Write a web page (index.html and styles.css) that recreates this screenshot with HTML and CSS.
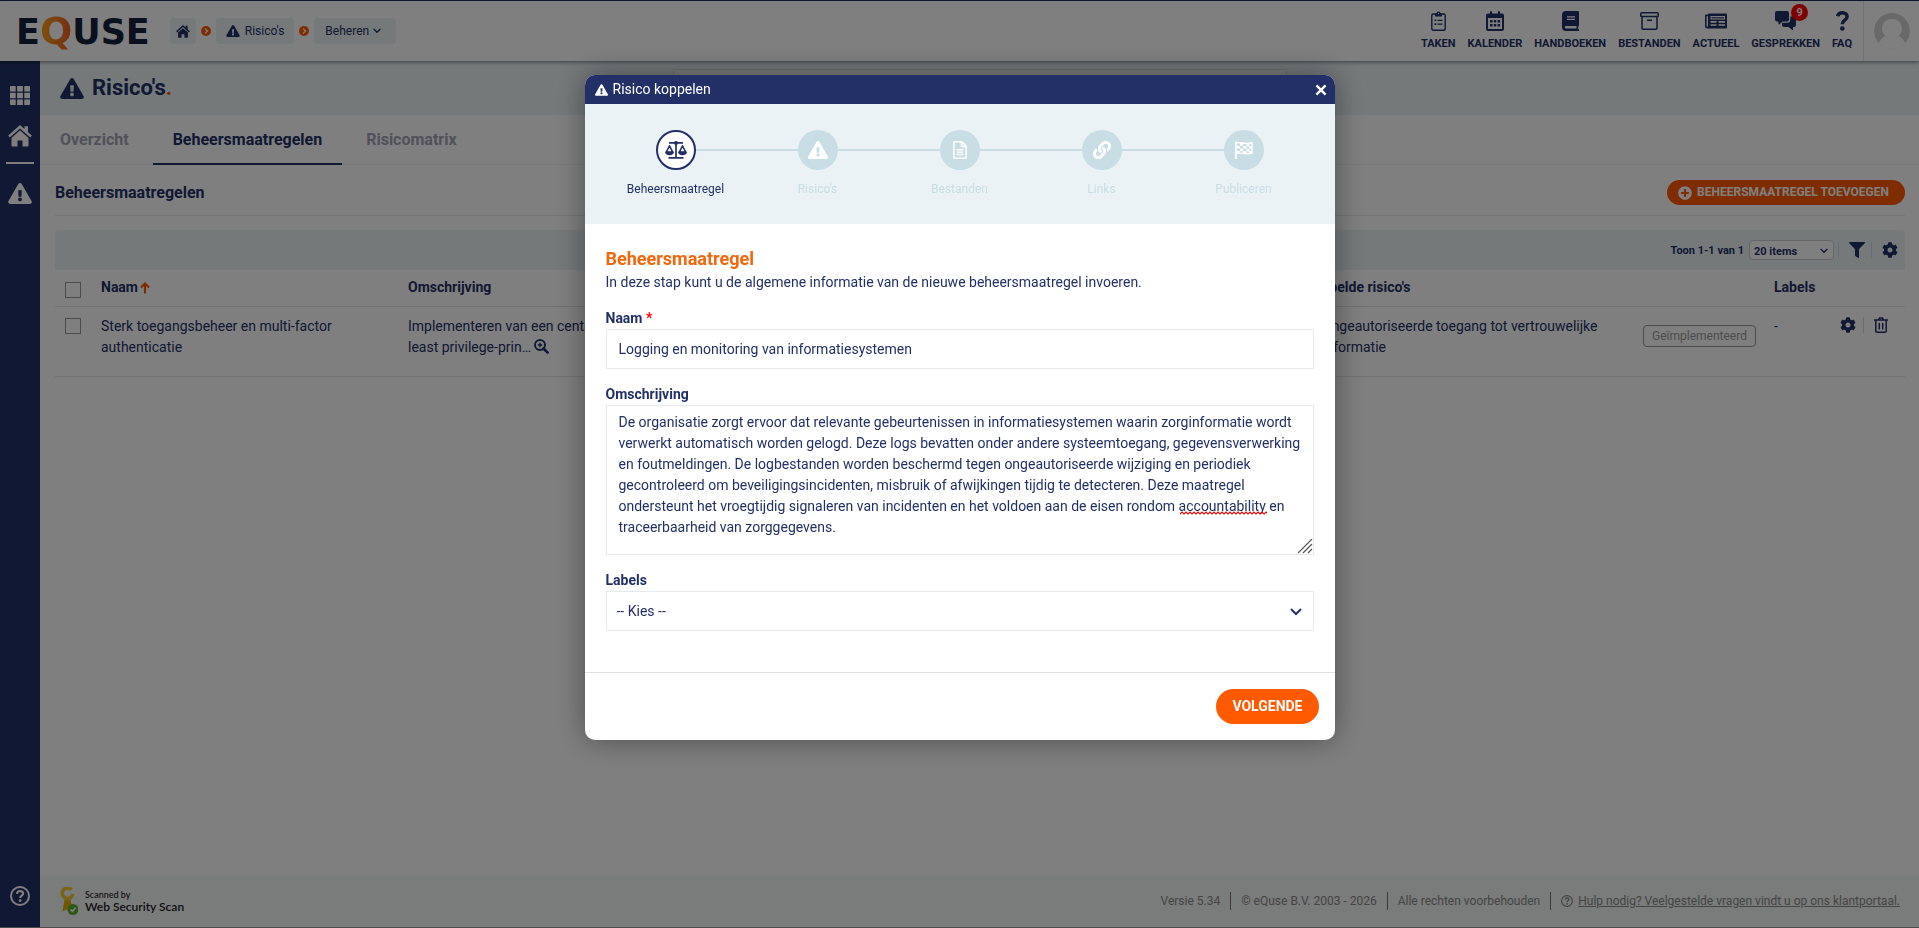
FILE: index.html
```html
<!DOCTYPE html>
<html lang="nl">
<head>
    <meta charset="UTF-8">
    <meta name="viewport" content="width=device-width, initial-scale=1.0">
    <title>Risico's</title>
    <link rel="stylesheet" href="styles.css">
</head>
<body>
    <!-- icons -->
    <svg class="icon-defs" aria-hidden="true">
        <symbol id="i-warning" viewBox="0 0 576 512">
            <path d="M569.517 440.013C587.975 472.007 564.806 512 527.94 512H48.054c-36.937 0-59.999-40.055-41.577-71.987L246.423 23.985c18.467-32.009 64.72-31.951 83.154 0l239.94 416.028zM288 354c-25.405 0-46 20.595-46 46s20.595 46 46 46 46-20.595 46-46-20.595-46-46-46zm-43.673-165.346l7.418 136c.347 6.364 5.609 11.346 11.982 11.346h48.546c6.373 0 11.635-4.982 11.982-11.346l7.418-136c.375-6.874-5.098-12.654-11.982-12.654h-63.383c-6.884 0-12.356 5.78-11.981 12.654z"/>
        </symbol>
        <symbol id="i-home" viewBox="0 0 24 22">
            <path d="M12 0 L16.500 4 V1.200 H20 V7.200 L23.800 10.600 L22.200 12.500 L12 3.400 L1.800 12.500 L.2 10.600 Z"/>
            <path d="M12 5.300 L20.500 12.900 V20.500 a1 1 0 0 1 -1 1 H14.500 V15.500 H9.500 V21.500 H4.500 a1 1 0 0 1 -1 -1 V12.900 Z"/>
        </symbol>
        <symbol id="i-grid" viewBox="0 0 20 19">
            <path d="M0 1a1 1 0 0 1 1-1H5.700V5.500H0zM7.100 0h5.800v5.500H7.100zM14.300 0H19a1 1 0 0 1 1 1V5.500H14.300zM0 6.800h5.700v5.400H0zM7.100 6.800h5.800v5.400H7.100zM14.300 6.800H20v5.400H14.300zM0 13.500h5.700V19H1a1 1 0 0 1-1-1zM7.100 13.500h5.800V19H7.100zM14.300 13.500H20V18a1 1 0 0 1-1 1h-4.700z"/>
        </symbol>
        <symbol id="i-help" viewBox="0 0 20 20">
            <g fill="none" stroke="currentColor" stroke-width="2">
                <circle cx="10" cy="10" r="9"/>
                <path stroke-width="2.200" d="M7 7.800 C7.200 5.800 8.500 5 10.100 5 C11.800 5 13.100 6.100 13.100 7.600 C13.100 9.600 10.200 9.700 10.200 11.900"/>
            </g>
            <circle cx="10.100" cy="14.600" r="1.400"/>
        </symbol>
        <symbol id="i-next" viewBox="0 0 10 10">
            <circle cx="5" cy="5" r="5"/>
            <path d="M4 2.600 L6.500 5 L4 7.400" fill="none" stroke="#fff" stroke-width="1.300"/>
        </symbol>
        <symbol id="i-chevron" viewBox="0 0 12 8">
            <path d="M1.500 1.500 L6 6 L10.500 1.500" fill="none" stroke="currentColor" stroke-width="2" stroke-linecap="round"/>
        </symbol>
        <symbol id="i-tasks" viewBox="0 0 15 20">
            <rect x=".8" y="3" width="13.400" height="16.200" rx="1.500" fill="none" stroke="currentColor" stroke-width="1.400"/>
            <path d="M4 2.600 H5.500 A2 2 0 0 1 9.500 2.600 H11 V5.500 H4 Z"/>
            <circle cx="7.500" cy="2.500" r=".7" fill="#fff"/>
            <path d="M3.500 8.500h1.800v1.600H3.500zM6.500 8.700h5v1.200h-5zM3.500 12.300h1.800v1.600H3.500zM6.500 12.500h5v1.200h-5z"/>
        </symbol>
        <symbol id="i-calendar" viewBox="0 0 18 20">
            <path d="M4 1a1 1 0 0 1 2 0V2.500H12V1a1 1 0 0 1 2 0V2.500H16a2 2 0 0 1 2 2V18a2 2 0 0 1-2 2H2a2 2 0 0 1-2-2V4.500a2 2 0 0 1 2-2H4z"/>
            <path fill="#fff" d="M2 7h14v11H2z"/>
            <path d="M4 9h2.500v2.500H4zM7.800 9h2.500v2.500H7.800zM11.600 9h2.500v2.500h-2.500zM4 13h2.500v2.500H4zM7.800 13h2.500v2.500H7.800zM11.600 13h2.500v2.500h-2.500z"/>
        </symbol>
        <symbol id="i-book" viewBox="0 0 17 20">
            <path d="M4 0H16a1 1 0 0 1 1 1V14.500l-.8 1v2.500l.8.800V20H4a4 4 0 0 1-4-4V4a4 4 0 0 1 4-4z"/>
            <path fill="#fff" d="M5 5.200h8v1.200H5zM5 7.700h8v1.200H5zM4 15h10.500v2.500H4a1.250 1.250 0 0 1 0-2.500z"/>
        </symbol>
        <symbol id="i-archive" viewBox="0 0 19 18">
            <g fill="none" stroke="currentColor" stroke-width="1.500">
                <rect x=".8" y=".8" width="17.400" height="3.800" rx=".8"/>
                <path d="M2 4.600V16.200a1 1 0 0 0 1 1H16a1 1 0 0 0 1-1V4.600M7 8.300h5"/>
            </g>
        </symbol>
        <symbol id="i-news" viewBox="0 0 22 15">
            <path d="M4 0H21a1 1 0 0 1 1 1V14a1 1 0 0 1-1 1H2.500A2.500 2.500 0 0 1 0 12.500V2a1 1 0 0 1 1-1H3a1 1 0 0 1 1-1z"/>
            <path fill="#fff" d="M1.600 2.800H3V12.500a.7.700 0 0 1-1.400 0zM5.500 2.600h14.500v3.300H5.500zM5.500 7.500h6v1.700h-6zM13.500 7.500h6.500v1.700h-6.500zM5.500 10.700h6v1.500h-6zM13.500 10.700h6.500v1.500h-6.500z"/>
            <path d="M6.500 3.700h12.500v1.200H6.500z"/>
        </symbol>
        <symbol id="i-chat" viewBox="0 0 21 20">
            <path d="M2 0H12a2 2 0 0 1 2 2V8.500a2 2 0 0 1-2 2H7.500L4 13.500a.4.400 0 0 1-.6-.3V10.500H2a2 2 0 0 1-2-2V2A2 2 0 0 1 2 0z"/>
            <path d="M15.300 5.500H19a2 2 0 0 1 2 2V14a2 2 0 0 1-2 2H18v2.800a.4.400 0 0 1-.6.300L13.500 16H9a2 2 0 0 1-2-2V11.800H12.300a3 3 0 0 0 3-3z"/>
        </symbol>
        <symbol id="i-question" viewBox="0 0 13 20">
            <path d="M1.500 5.200 C2.300 2.700 4.200 1.800 6.500 1.800 C9.200 1.800 11.100 3.400 11.100 5.800 C11.100 9.300 6.300 9.200 6.300 13.200" fill="none" stroke="currentColor" stroke-width="3.400"/>
            <circle cx="6.300" cy="17.500" r="2.300"/>
        </symbol>
        <symbol id="i-plus" viewBox="0 0 512 512">
            <path d="M256 8C119 8 8 119 8 256s111 248 248 248 248-111 248-248S393 8 256 8zm144 276c0 6.600-5.400 12-12 12h-92v92c0 6.600-5.400 12-12 12h-56c-6.600 0-12-5.400-12-12v-92h-92c-6.600 0-12-5.400-12-12v-56c0-6.600 5.400-12 12-12h92v-92c0-6.600 5.400-12 12-12h56c6.600 0 12 5.400 12 12v92h92c6.600 0 12 5.400 12 12v56z"/>
        </symbol>
        <symbol id="i-filter" viewBox="0 0 512 512">
            <path d="M487.976 0H24.028C2.710 0-8.047 25.866 7.058 40.971L192 225.941V432c0 7.831 3.821 15.170 10.237 19.662l80 55.980C298.020 518.690 320 507.493 320 487.980V225.941l184.947-184.970C520.021 25.896 509.338 0 487.976 0z"/>
        </symbol>
        <symbol id="i-cog" viewBox="0 0 512 512">
            <path d="M487.400 315.700l-42.600-24.600c4.300-23.200 4.300-47 0-70.200l42.600-24.600c4.900-2.800 7.100-8.600 5.500-14-11.100-35.600-30-67.800-54.700-94.600-3.800-4.100-10-5.100-14.800-2.300L380.800 110c-17.900-15.400-38.500-27.300-60.800-35.100V25.800c0-5.600-3.900-10.500-9.400-11.700-36.700-8.200-74.300-7.800-109.200 0-5.500 1.200-9.400 6.100-9.400 11.700V75c-22.200 7.900-42.800 19.800-60.800 35.100L88.700 85.500c-4.900-2.800-11-1.900-14.800 2.300-24.700 26.700-43.600 58.900-54.700 94.600-1.700 5.400.6 11.200 5.500 14L67.300 221c-4.300 23.200-4.300 47 0 70.200l-42.600 24.600c-4.900 2.800-7.100 8.600-5.500 14 11.100 35.600 30 67.800 54.700 94.600 3.800 4.100 10 5.100 14.800 2.300l42.600-24.600c17.900 15.400 38.500 27.300 60.800 35.100v49.200c0 5.600 3.900 10.500 9.400 11.700 36.700 8.200 74.300 7.800 109.200 0 5.500-1.200 9.400-6.100 9.400-11.700v-49.200c22.200-7.900 42.800-19.800 60.800-35.100l42.600 24.600c4.900 2.800 11 1.900 14.800-2.300 24.700-26.700 43.600-58.900 54.700-94.600 1.500-5.500-.7-11.300-5.600-14.100zM256 336c-44.100 0-80-35.900-80-80s35.900-80 80-80 80 35.900 80 80-35.900 80-80 80z"/>
        </symbol>
        <symbol id="i-trash" viewBox="0 0 14 16">
            <path d="M0 3h14M4.500 3 L5.500 1H8.500L9.500 3M1.800 3V14a1.200 1.200 0 0 0 1.200 1.200H11A1.200 1.200 0 0 0 12.200 14V3M5.300 6v6.500M8.700 6v6.500" fill="none" stroke="currentColor" stroke-width="1.500"/>
        </symbol>
        <symbol id="i-zoom" viewBox="0 0 15 15">
            <path d="M9.500 9.500L13.600 13.600" stroke="currentColor" stroke-width="2.600" stroke-linecap="round"/>
            <circle cx="6" cy="6" r="5" fill="none" stroke="currentColor" stroke-width="1.900"/>
            <path d="M3.700 6h4.600M6 3.700v4.600" stroke="currentColor" stroke-width="1.400"/>
        </symbol>
        <symbol id="i-up" viewBox="0 0 10 12">
            <path d="M5 11.500V1.500M1 5.500L5 1.500L9 5.500" fill="none" stroke="currentColor" stroke-width="2.200"/>
        </symbol>
        <symbol id="i-close" viewBox="0 0 10 10">
            <path d="M1.200 1.200L8.800 8.800M8.800 1.200L1.200 8.800" stroke="currentColor" stroke-width="2"/>
        </symbol>
        <symbol id="i-scale" viewBox="0 0 22 18">
            <g fill="none" stroke="currentColor" stroke-width="1.700">
                <path d="M4 1.900H18M11 1V16.600M3.500 16.900H18.500"/>
                <path stroke-width="1.600" stroke-linejoin="round" d="M4.500 4.800L1.300 11H7.700ZM17.500 4.800L14.300 11H20.700Z"/>
            </g>
            <circle cx="11" cy="2" r="2"/>
            <path d="M0 10.800H9C9 13 7 14.300 4.500 14.300S0 13 0 10.800zM13 10.800H22C22 13 20 14.300 17.500 14.300S13 13 13 10.800z"/>
        </symbol>
        <symbol id="i-file" viewBox="0 0 14 18">
            <path d="M2 .8H8.800L13.200 5.200V16a1.200 1.200 0 0 1-1.200 1.200H2A1.200 1.200 0 0 1 .8 16V2A1.200 1.200 0 0 1 2 .8zM8.600 1V5.500H13" fill="none" stroke="currentColor" stroke-width="1.600"/>
            <path d="M3.500 8h7v1.400h-7zM3.500 10.400h7v1.400h-7zM3.500 12.800h7v1.400h-7z"/>
        </symbol>
        <symbol id="i-link" viewBox="0 0 512 512">
            <path d="M326.612 185.391c59.747 59.809 58.927 155.698.36 214.590-.11.120-.24.250-.36.370l-67.200 67.200c-59.270 59.270-155.699 59.262-214.960 0-59.270-59.260-59.270-155.700 0-214.960l37.106-37.106c9.840-9.840 26.786-3.300 27.294 10.606.648 17.722 3.826 35.527 9.690 52.721 1.986 5.822.567 12.262-3.783 16.612l-13.087 13.087c-28.026 28.026-28.905 73.660-1.155 101.960 28.024 28.579 74.086 28.749 102.325.510l67.200-67.190c28.191-28.191 28.073-73.757 0-101.830-3.701-3.694-7.429-6.564-10.341-8.569a16.037 16.037 0 0 1-6.947-12.606c-.396-10.567 3.348-21.456 11.698-29.806l21.054-21.055c5.521-5.521 14.182-6.199 20.584-1.731a152.482 152.482 0 0 1 20.522 17.197zM467.547 44.449c-59.261-59.262-155.690-59.270-214.960 0l-67.200 67.200c-.12.120-.25.250-.36.370-58.566 58.892-59.387 154.781.360 214.590a152.454 152.454 0 0 0 20.521 17.196c6.402 4.468 15.064 3.789 20.584-1.731l21.054-21.055c8.350-8.350 12.094-19.239 11.698-29.806a16.037 16.037 0 0 0-6.947-12.606c-2.912-2.005-6.640-4.875-10.341-8.569-28.073-28.073-28.191-73.639 0-101.830l67.200-67.190c28.239-28.239 74.300-28.069 102.325.510 27.750 28.300 26.872 73.934-1.155 101.960l-13.087 13.087c-4.350 4.350-5.769 10.790-3.783 16.612 5.864 17.194 9.042 34.999 9.690 52.721.509 13.906 17.454 20.446 27.294 10.606l37.106-37.106c59.271-59.259 59.271-155.699.001-214.959z"/>
        </symbol>
        <symbol id="i-flag" viewBox="0 0 18 18">
            <path d="M1 1V18" stroke="currentColor" stroke-width="1.700" stroke-linecap="round"/>
            <path d="M1.500 2.200C6 .2 8.500 3.900 17 1.700V12C9 14.300 6.500 10.800 1.500 12.600" fill="none" stroke="currentColor" stroke-width="1.400"/>
            <path d="M5 1.800h3v3H5zM11.500 2.500h2.800v2.800h-2.800zM2 4.800h3v2.700H2zM8 5h3.500v2.700H8zM14.300 5h2.500v2.500h-2.500zM5 7.500h3v2.700H5zM11.500 7.700h2.800v2.700h-2.800zM8 10.200h3.500v2.300H8zM2 10h3v2.300H2zM14.300 10h2.500v2.300h-2.500z"/>
        </symbol>
    </svg>

    <div class="page">
        <header class="topbar">
            <a href="#" class="logo" aria-label="eQuse">E<span class="logo-q">Q</span>USE</a>
            <nav class="breadcrumbs">
                <a href="#" class="crumb crumb-home" aria-label="Home"><svg width="14" height="13"><use href="#i-home"/></svg></a>
                <svg class="crumb-sep" width="10" height="10"><use href="#i-next"/></svg>
                <a href="#" class="crumb"><svg width="14" height="12"><use href="#i-warning"/></svg>Risico's</a>
                <svg class="crumb-sep" width="10" height="10"><use href="#i-next"/></svg>
                <button type="button" class="crumb crumb-menu">Beheren<svg width="8" height="6"><use href="#i-chevron"/></svg></button>
            </nav>
            <nav class="shortcuts">
                <a href="#"><svg width="15" height="20"><use href="#i-tasks"/></svg>TAKEN</a>
                <a href="#"><svg width="18" height="20"><use href="#i-calendar"/></svg>KALENDER</a>
                <a href="#"><svg width="17" height="20"><use href="#i-book"/></svg>HANDBOEKEN</a>
                <a href="#"><svg width="19" height="20"><use href="#i-archive"/></svg>BESTANDEN</a>
                <a href="#"><svg width="22" height="20"><use href="#i-news"/></svg>ACTUEEL</a>
                <a href="#"><svg width="21" height="20"><use href="#i-chat"/></svg>GESPREKKEN<span class="badge">9</span></a>
                <a href="#"><svg width="13" height="20"><use href="#i-question"/></svg>FAQ</a>
            </nav>
            <a href="#" class="avatar" aria-label="Profiel">
                <svg width="36" height="36" viewBox="0 0 36 36">
                    <circle cx="18" cy="18" r="18" fill="#d2d2d2"/>
                    <path fill="#fff" d="M18 6C11.500 6 8 10.500 8 15.500C8 18.500 9.500 21.500 11.500 23C7 25 4.500 29 3.500 36H32.500C31.500 29 29 25 24.500 23C26.500 21.500 28 18.500 28 15.500C28 10.500 24.500 6 18 6Z"/>
                </svg>
            </a>
        </header>

        <div class="main">
            <aside class="sidebar">
                <a href="#" aria-label="Menu"><svg width="20" height="19"><use href="#i-grid"/></svg></a>
                <a href="#" aria-label="Home"><svg width="24" height="22"><use href="#i-home"/></svg></a>
                <hr>
                <a href="#" aria-label="Risico's"><svg width="24" height="21"><use href="#i-warning"/></svg></a>
                <a href="#" class="sidebar-help" aria-label="Help"><svg width="20" height="20"><use href="#i-help"/></svg></a>
            </aside>

            <div class="content">
                <div class="page-title">
                    <h1><svg width="24" height="21"><use href="#i-warning"/></svg><span>Risico's<em>.</em></span></h1>
                    <input type="search" class="search" aria-label="Zoeken">
                </div>
                <nav class="tabs">
                    <a href="#">Overzicht</a>
                    <a href="#" class="active">Beheersmaatregelen</a>
                    <a href="#">Risicomatrix</a>
                </nav>
                <section class="overview">
                    <div class="section-head">
                        <h2>Beheersmaatregelen</h2>
                        <button type="button" class="btn btn-small"><svg width="14" height="14"><use href="#i-plus"/></svg>BEHEERSMAATREGEL TOEVOEGEN</button>
                    </div>
                    <div class="toolbar">
                        <label for="pageSize">Toon 1-1 van 1</label>
                        <div class="page-size">
                            <select id="pageSize"><option>20 items</option></select>
                            <svg width="8" height="6"><use href="#i-chevron"/></svg>
                        </div>
                        <button type="button" class="icon-btn" aria-label="Filter"><svg width="16" height="16"><use href="#i-filter"/></svg></button>
                        <button type="button" class="icon-btn" aria-label="Instellingen"><svg width="16" height="16"><use href="#i-cog"/></svg></button>
                    </div>
                    <table class="measures">
                        <thead>
                            <tr>
                                <th class="col-check"><input type="checkbox" aria-label="Alles selecteren"></th>
                                <th class="col-name">Naam<svg class="sort" width="10" height="12"><use href="#i-up"/></svg></th>
                                <th>Omschrijving</th>
                                <th class="col-risk">Gekoppelde risico's</th>
                                <th class="col-status"></th>
                                <th class="col-labels">Labels</th>
                                <th class="col-actions"></th>
                            </tr>
                        </thead>
                        <tbody>
                            <tr>
                                <td><input type="checkbox" aria-label="Selecteren"></td>
                                <td>Sterk toegangsbeheer en multi-factor authenticatie</td>
                                <td><p class="summary">Implementeren van een centraal toegangsbeheer, least privilege-prin… <svg width="15" height="15"><use href="#i-zoom"/></svg></p></td>
                                <td><div class="risk">Ongeautoriseerde toegang tot vertrouwelijke informatie</div></td>
                                <td><span class="status">Geïmplementeerd</span></td>
                                <td>-</td>
                                <td>
                                    <div class="actions">
                                        <button type="button" class="icon-btn" aria-label="Bewerken"><svg width="16" height="16"><use href="#i-cog"/></svg></button>
                                        <button type="button" class="icon-btn" aria-label="Verwijderen"><svg width="14" height="16"><use href="#i-trash"/></svg></button>
                                    </div>
                                </td>
                            </tr>
                        </tbody>
                    </table>
                </section>

                <footer class="footer">
                    <a href="#" class="scan">
                        <svg width="18" height="28" viewBox="0 0 18 28">
                            <path d="M4.500 12.500L2.500 24.500L8 22L13 24.500L10.500 12.500Z" fill="#e5ac10"/>
                            <path d="M11.500 2.700A5.300 5.300 0 1 0 12.800 7" fill="none" stroke="#f2c62e" stroke-width="3.600"/>
                            <circle cx="13" cy="22.500" r="5.500" fill="#5fae2e"/>
                            <path d="M10.500 22.500L12.300 24.300L15.600 20.800" fill="none" stroke="#fff" stroke-width="1.600"/>
                        </svg>
                        <span><small>Scanned by</small>Web Security Scan</span>
                    </a>
                    <ul class="legal">
                        <li>Versie 5.34</li>
                        <li>© eQuse B.V. 2003 - 2026</li>
                        <li>Alle rechten voorbehouden</li>
                        <li><svg width="12" height="12"><use href="#i-help"/></svg><a href="#">Hulp nodig? Veelgestelde vragen vindt u op ons klantportaal.</a></li>
                    </ul>
                </footer>
            </div>
        </div>
    </div>

    <div class="overlay">
        <form class="modal" role="dialog" aria-labelledby="modalTitle">
            <div class="modal-header">
                <svg width="13" height="12"><use href="#i-warning"/></svg>
                <span id="modalTitle">Risico koppelen</span>
                <button type="button" class="modal-close" aria-label="Sluiten"><svg width="12" height="12"><use href="#i-close"/></svg></button>
            </div>
            <ol class="steps">
                <li class="current"><span class="dot"><svg width="22" height="18"><use href="#i-scale"/></svg></span>Beheersmaatregel</li>
                <li><span class="dot"><svg width="20" height="18"><use href="#i-warning"/></svg></span>Risico's</li>
                <li><span class="dot"><svg width="14" height="18"><use href="#i-file"/></svg></span>Bestanden</li>
                <li><span class="dot"><svg width="18" height="18"><use href="#i-link"/></svg></span>Links</li>
                <li><span class="dot"><svg width="18" height="18"><use href="#i-flag"/></svg></span>Publiceren</li>
            </ol>
            <div class="modal-body">
                <h3>Beheersmaatregel</h3>
                <p>In deze stap kunt u de algemene informatie van de nieuwe beheersmaatregel invoeren.</p>
                <div class="field">
                    <label for="name">Naam <span class="required">*</span></label>
                    <input type="text" id="name" value="Logging en monitoring van informatiesystemen">
                </div>
                <div class="field">
                    <label for="description">Omschrijving</label>
                    <div class="control">
                        <textarea id="description">De organisatie zorgt ervoor dat relevante gebeurtenissen in informatiesystemen waarin zorginformatie wordt verwerkt automatisch worden gelogd. Deze logs bevatten onder andere systeemtoegang, gegevensverwerking en foutmeldingen. De logbestanden worden beschermd tegen ongeautoriseerde wijziging en periodiek gecontroleerd om beveiligingsincidenten, misbruik of afwijkingen tijdig te detecteren. Deze maatregel ondersteunt het vroegtijdig signaleren van incidenten en het voldoen aan de eisen rondom accountability en traceerbaarheid van zorggegevens.</textarea>
                        <svg class="spelling" width="87" height="4">
                            <defs>
                                <pattern id="wave" width="4" height="4" patternUnits="userSpaceOnUse">
                                    <path d="M-1 2L0 3L2 1L4 3L5 2" fill="none" stroke="#e00000" stroke-width="1.200"/>
                                </pattern>
                            </defs>
                            <rect width="87" height="4" fill="url(#wave)"/>
                        </svg>
                    </div>
                </div>
                <div class="field">
                    <label for="labels">Labels</label>
                    <div class="control">
                        <select id="labels"><option>-- Kies --</option></select>
                        <svg class="select-arrow" width="12" height="8"><use href="#i-chevron"/></svg>
                    </div>
                </div>
            </div>
            <div class="modal-footer">
                <button type="submit" class="btn">VOLGENDE</button>
            </div>
        </form>
    </div>
</body>
</html>
```

FILE: styles.css
```css
* {
    box-sizing: border-box;
}
body {
    margin: 0;
    font-family: Roboto, Arial, sans-serif;
    font-size: 14px;
    line-height: 21px;
    color: #233067;
    background-color: #fff;
}
a {
    color: inherit;
    text-decoration: none;
}
button, input, select, textarea {
    font: inherit;
    color: inherit;
}
button {
    padding: 0;
    border: none;
    background: none;
    cursor: pointer;
}
svg {
    fill: currentColor;
    flex-shrink: 0;
}
h1, h2, h3, p, ul, ol {
    margin: 0;
    padding: 0;
}
.icon-defs {
    position: absolute;
    width: 0;
    height: 0;
}
.page {
    min-height: 100vh;
    display: flex;
    flex-direction: column;
    border-top: 1px solid #233067;
    border-bottom: 1px solid #999;
}

/* top bar */
.topbar {
    position: relative;
    z-index: 1;
    height: 60px;
    display: flex;
    align-items: center;
    background-color: #fff;
    box-shadow: 0 1px 4px rgba(0,0,0,0.5);
}
.logo {
    display: flex;
    align-items: baseline;
    padding-left: 16px;
    font-family: "DejaVu Sans", sans-serif;
    font-size: 35px;
    font-weight: bold;
    line-height: 40px;
    color: #14213d;
}
.logo-q {
    font-size: 38px;
    background-image: linear-gradient(90deg, #f9a51a, #f15a24);
    background-clip: text;
    -webkit-background-clip: text;
    color: transparent;
}
.breadcrumbs {
    display: flex;
    align-items: center;
    gap: 5px;
    margin-left: 20px;
    font-size: 12px;
}
.crumb {
    display: flex;
    align-items: center;
    gap: 5px;
    height: 26px;
    padding: 0 10px;
    border-radius: 4px;
    background-color: #eaf2f5;
}
.crumb-home {
    padding: 0 6px;
}
.crumb-menu {
    gap: 4px;
    padding: 0 15px 0 11px;
}
.crumb-sep {
    color: #ff5a00;
}
.shortcuts {
    display: flex;
    gap: 12px;
    margin-left: auto;
    font-size: 11px;
    font-weight: bold;
    line-height: 14px;
}
.shortcuts a {
    position: relative;
    display: flex;
    flex-direction: column;
    align-items: center;
    gap: 6px;
}
.badge {
    position: absolute;
    top: -7px;
    right: 12px;
    width: 17px;
    height: 17px;
    border-radius: 50%;
    background-color: #f00;
    color: #fff;
    font-size: 11px;
    line-height: 17px;
    text-align: center;
}
.avatar {
    display: flex;
    align-items: center;
    height: 60px;
    margin-left: 11px;
    padding: 0 9px 0 10px;
    border-left: 1px solid #e0e4e8;
}
.avatar svg {
    border-radius: 50%;
}

/* sidebar */
.main {
    flex: 1;
    display: flex;
}
.sidebar {
    width: 40px;
    display: flex;
    flex-direction: column;
    align-items: center;
    padding: 25px 0 21px;
    background-color: #233067;
    color: #fff;
}
.sidebar a {
    display: flex;
    margin-bottom: 20px;
}
.sidebar hr {
    width: 28px;
    height: 2px;
    margin: -5px 0 19px;
    border: none;
    background-color: #fff;
}
.sidebar .sidebar-help {
    margin: auto 0 0;
}
.content {
    flex: 1;
    min-width: 0;
    display: flex;
    flex-direction: column;
}
.page-title {
    height: 54px;
    display: flex;
    align-items: center;
    justify-content: center;
    padding: 0 20px;
    background-color: #eaf2f5;
}
.page-title h1 {
    flex: 1;
    display: flex;
    align-items: center;
    gap: 8px;
    font-size: 22px;
    line-height: 26px;
}
.page-title::after {
    content: "";
    flex: 1;
}
.page-title em {
    color: #ff5a00;
    font-style: normal;
}
.search {
    width: 614px;
    height: 38px;
    border: 1px solid #d5dde0;
    border-radius: 4px;
    background-color: #f5f9fa;
}
.tabs {
    display: flex;
    gap: 4px;
    border-bottom: 1px solid #eaf2f5;
    font-size: 16px;
    font-weight: bold;
    color: #a0a3b5;
}
.tabs a {
    padding: 14px 20px 13px;
    margin-bottom: -1px;
    border-bottom: 2px solid transparent;
}
.tabs .active {
    border-color: #233067;
    color: #233067;
}
.overview {
    flex: 1;
    padding: 0 14px 0 15px;
}
.section-head {
    display: flex;
    align-items: center;
    justify-content: space-between;
    height: 51px;
    margin-bottom: 14px;
    padding-top: 5px;
    border-bottom: 1px solid #e6e9ec;
}
.section-head h2 {
    font-size: 16px;
}
.btn {
    display: flex;
    align-items: center;
    gap: 5px;
    height: 35px;
    padding: 0 16px;
    border-radius: 18px;
    background-color: #ff5a00;
    color: #fff;
    font-weight: bold;
}
.btn-small {
    height: 25px;
    padding: 0 16px 0 11px;
    font-size: 12px;
}
.toolbar {
    display: flex;
    align-items: center;
    justify-content: flex-end;
    height: 40px;
    padding-right: 7px;
    border-radius: 4px 4px 0 0;
    background-color: #eaf2f5;
    font-size: 11px;
    font-weight: bold;
}
.page-size {
    position: relative;
    display: flex;
    margin: 0 4px 0 5px;
}
.page-size select {
    width: 85px;
    height: 20px;
    padding: 0 4px;
    border: 1px solid #c8cdd2;
    border-radius: 4px;
    background-color: #fff;
    appearance: none;
}
.page-size svg {
    position: absolute;
    top: 8px;
    right: 6px;
}
.icon-btn {
    display: flex;
}
.toolbar .icon-btn {
    padding: 0 0 0 10px;
    border-left: 1px solid #d3dade;
}
.toolbar .icon-btn + .icon-btn {
    margin-left: 6px;
}

/* table */
.measures {
    width: 100%;
    table-layout: fixed;
    border-collapse: collapse;
    text-align: left;
}
.measures th {
    height: 36px;
    padding: 0 10px;
    border-bottom: 1px solid #e0e4e8;
}
.measures td {
    height: 70px;
    padding: 9px 10px 0;
    border-bottom: 1px solid #e0e4e8;
    vertical-align: top;
}
.measures input {
    display: block;
    width: 16px;
    height: 16px;
    margin: 2px 0 0;
    border: 1px solid #999;
    background-color: #fff;
    appearance: none;
}
.measures th input {
    margin-top: 5px;
}
.col-check { width: 36px; }
.col-name { width: 307px; }
.col-risk { width: 354px; }
.col-status { width: 131px; }
.col-labels { width: 66px; }
.col-actions { width: 75px; }
.sort {
    margin-left: 2px;
    color: #ff5a00;
    vertical-align: -2px;
}
.summary {
    max-width: 330px;
}
.summary svg {
    vertical-align: -2px;
}
.risk {
    padding-left: 33px;
}
.status {
    display: inline-block;
    height: 22px;
    margin-top: 9px;
    padding: 0 8px;
    border: 1px solid #999;
    border-radius: 4px;
    color: #999;
    font-size: 12px;
    line-height: 20px;
    white-space: nowrap;
}
.actions {
    display: flex;
    padding-top: 1px;
}
.actions .icon-btn + .icon-btn {
    margin-left: 7px;
    padding-left: 10px;
    border-left: 1px solid #d3dade;
}

/* footer */
.footer {
    display: flex;
    align-items: center;
    justify-content: space-between;
    height: 51px;
    padding: 0 19px 1px 20px;
    background-color: #f5f6f6;
    font-size: 12px;
    color: #8a8a8a;
}
.scan {
    display: flex;
    align-items: center;
    gap: 7px;
    color: #222;
    font-family: Lato, sans-serif;
    font-size: 12px;
    font-weight: 600;
    line-height: 14px;
}
.scan small {
    display: block;
    font-size: 9px;
    font-weight: 500;
    line-height: 11px;
}
.legal {
    display: flex;
    list-style: none;
    line-height: 18px;
}
.legal li {
    display: flex;
    align-items: center;
    gap: 5px;
    padding: 0 10px;
    border-left: 1px solid #777;
}
.legal li:first-child {
    border-left: none;
}
.legal li:last-child {
    padding-right: 0;
}
.legal a {
    text-decoration: underline;
}

/* modal */
.overlay {
    position: fixed;
    inset: 0;
    z-index: 10;
    padding-top: 75px;
    background-color: rgba(0,0,0,0.5);
}
.modal {
    width: 750px;
    max-width: 100%;
    margin: 0 auto;
    border-radius: 10px;
    overflow: hidden;
    background-color: #fff;
    box-shadow: 0 0 30px rgba(0,0,0,0.4);
}
.modal-header {
    display: flex;
    align-items: center;
    gap: 5px;
    height: 29px;
    padding: 0 8px 0 10px;
    background-color: #233067;
    color: #fff;
}
.modal-close {
    display: flex;
    margin-left: auto;
}
.steps {
    display: flex;
    height: 120px;
    padding: 26px 20px 0;
    background-color: #eaf2f5;
    list-style: none;
    font-size: 12px;
    line-height: 18px;
    color: #c9dde5;
}
.steps li {
    position: relative;
    flex: 1;
    display: flex;
    flex-direction: column;
    align-items: center;
    gap: 10px;
}
/* line to the next step */
.steps li + li::before {
    content: "";
    position: absolute;
    top: 19px;
    right: 50%;
    width: 100%;
    height: 2px;
    background-color: #c9dde5;
}
.dot {
    position: relative;
    z-index: 1;
    display: flex;
    align-items: center;
    justify-content: center;
    width: 40px;
    height: 40px;
    border-radius: 50%;
    background-color: #c9dde5;
    color: #fff;
}
.steps .current {
    color: #233067;
}
.steps .current .dot {
    z-index: 2;
    border: 2px solid #233067;
    background-color: #fff;
    color: #233067;
}
.modal-body {
    padding: 23px 21px 41px;
}
.modal-body h3 {
    margin-bottom: 1px;
    color: #f2660c;
    font-size: 18px;
    line-height: 24px;
}
.field {
    margin-top: 15px;
}
.field label {
    display: block;
    font-weight: bold;
}
.required {
    color: #f00;
}
.control {
    position: relative;
    display: flex;
}
.field input, .field textarea, .field select {
    display: block;
    width: 100%;
    height: 40px;
    padding: 0 12px;
    border: 1px solid #e6eaec;
    background-color: #fff;
}
.field textarea {
    height: 150px;
    padding: 6px 12px;
    resize: vertical;
}
.field textarea::-webkit-resizer {
    background-image: url("data:image/svg+xml,%3Csvg xmlns='http://www.w3.org/2000/svg' width='15' height='15'%3E%3Cpath d='M0 14L14 0M5 14L14 5M10 14L14 10' stroke='%23555' stroke-width='1.200'/%3E%3C/svg%3E");
    background-repeat: no-repeat;
}
.field select {
    padding: 0 10px;
    appearance: none;
}
.spelling {
    position: absolute;
    top: 106px;
    left: 574px;
}
.select-arrow {
    position: absolute;
    top: 17px;
    right: 12px;
}
.modal-footer {
    display: flex;
    justify-content: flex-end;
    padding: 16px;
    border-top: 1px solid #dfe2e4;
}
```
